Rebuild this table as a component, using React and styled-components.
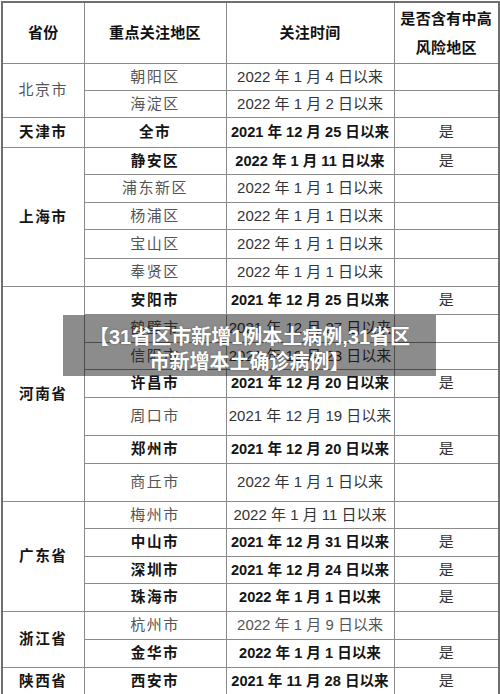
import React from "react";
import styled, { createGlobalStyle } from "styled-components";

const Global = createGlobalStyle`
  html, body { margin: 0; padding: 0; background: #fff; }
  body { font-family: "Liberation Sans", "Noto Sans CJK SC", sans-serif; }
`;

const Page = styled.div`
  position: relative;
  width: 500px;
  height: 694px;
  padding: 1px 0 0 1px;
  box-sizing: border-box;
  overflow: hidden;
`;

const Table = styled.table`
  border-collapse: collapse;
  table-layout: fixed;
  width: 497px;
  border: 2px solid #6e6e6e;
`;

const HeadRow = styled.tr`
  height: 61px;
`;

const Th = styled.th`
  border: 1px solid #8a8a8a;
  padding: 0;
  font-size: 15px;
  font-weight: 700;
  color: #111;
  text-align: center;
  vertical-align: middle;
  line-height: 29px;
  letter-spacing: 0.3px;
`;

const Row = styled.tr`
  height: ${(p) => p.$h}px;
`;

const Cell = styled.td`
  border: 1px solid #8a8a8a;
  padding: 0;
  text-align: center;
  vertical-align: middle;
  font-size: ${(p) => (p.$bold ? "14.6px" : "15px")};
  line-height: 18px;
  white-space: nowrap;
  font-weight: ${(p) => (p.$bold ? 700 : 400)};
  color: ${(p) => (p.$bold ? "#151515" : p.$light ? "#555" : "#333")};
  letter-spacing: ${(p) => (p.$spaced ? "1.5px" : "0")};
`;

const Banner = styled.div`
  position: absolute;
  left: 63px;
  top: 315px;
  width: 373px;
  height: 61px;
  box-sizing: border-box;
  padding-top: 8px;
  background: rgba(0, 0, 0, 0.45);
  display: flex;
  align-items: center;
  justify-content: center;
  text-align: center;
  color: #fff;
  font-family: "Liberation Sans", "Noto Sans CJK SC", sans-serif;
  font-weight: 700;
  font-size: 20px;
  line-height: 25px;
  white-space: nowrap;
  text-shadow: 0 0 2px rgba(0, 0, 0, 0.35);
`;

const groups = [
  {
    prov: "北京市",
    bold: false,
    rows: [
      { d: "朝阳区", t: "2022 年 1 月 4 日以来", h: 27 },
      { d: "海淀区", t: "2022 年 1 月 2 日以来", h: 27 },
    ],
  },
  {
    prov: "天津市",
    bold: true,
    rows: [{ d: "全市", t: "2021 年 12 月 25 日以来", r: "是", b: true, h: 30 }],
  },
  {
    prov: "上海市",
    bold: true,
    rows: [
      { d: "静安区", t: "2022 年 1 月 11 日以来", r: "是", b: true, h: 27 },
      { d: "浦东新区", t: "2022 年 1 月 1 日以来", h: 28 },
      { d: "杨浦区", t: "2022 年 1 月 1 日以来", h: 27 },
      { d: "宝山区", t: "2022 年 1 月 1 日以来", h: 29 },
      { d: "奉贤区", t: "2022 年 1 月 1 日以来", h: 28 },
    ],
  },
  {
    prov: "河南省",
    bold: true,
    rows: [
      { d: "安阳市", t: "2021 年 12 月 25 日以来", r: "是", b: true, h: 28 },
      { d: "鹤壁市", t: "2021 年 12 月 27 日以来", h: 28 },
      { d: "信阳市", t: "2021 年 12 月 23 日以来", h: 27 },
      { d: "许昌市", t: "2021 年 12 月 20 日以来", r: "是", b: true, h: 28 },
      { d: "周口市", t: "2021 年 12 月 19 日以来", h: 38 },
      { d: "郑州市", t: "2021 年 12 月 20 日以来", r: "是", b: true, h: 28 },
      { d: "商丘市", t: "2022 年 1 月 1 日以来", h: 38 },
    ],
  },
  {
    prov: "广东省",
    bold: true,
    rows: [
      { d: "梅州市", t: "2022 年 1 月 11 日以来", h: 27 },
      { d: "中山市", t: "2021 年 12 月 31 日以来", r: "是", b: true, h: 28 },
      { d: "深圳市", t: "2021 年 12 月 24 日以来", r: "是", b: true, h: 27 },
      { d: "珠海市", t: "2022 年 1 月 1 日以来", r: "是", b: true, h: 28 },
    ],
  },
  {
    prov: "浙江省",
    bold: true,
    rows: [
      { d: "杭州市", t: "2022 年 1 月 9 日以来", h: 28, light: true },
      { d: "金华市", t: "2022 年 1 月 1 日以来", r: "是", b: true, h: 28 },
    ],
  },
  {
    prov: "陕西省",
    bold: true,
    rows: [{ d: "西安市", t: "2021 年 11 月 28 日以来", r: "是", b: true, h: 29 }],
  },
];

export default function App() {
  return (
    <>
      <Global />
      <Page>
        <Table>
          <colgroup>
            <col style={{ width: 82 }} />
            <col style={{ width: 142 }} />
            <col style={{ width: 168 }} />
            <col style={{ width: 105 }} />
          </colgroup>
          <thead>
            <HeadRow>
              <Th>省份</Th>
              <Th>重点关注地区</Th>
              <Th>关注时间</Th>
              <Th>
                是否含有中高
                <br />
                风险地区
              </Th>
            </HeadRow>
          </thead>
          <tbody>
            {groups.map((g) =>
              g.rows.map((r, i) => (
                <Row key={g.prov + r.d} $h={r.h}>
                  {i === 0 && (
                    <Cell rowSpan={g.rows.length} $bold={g.bold} $light={!g.bold} $spaced>
                      {g.prov}
                    </Cell>
                  )}
                  <Cell $bold={r.b} $light $spaced>
                    {r.d}
                  </Cell>
                  <Cell $bold={r.b} $light={r.light}>
                    {r.t}
                  </Cell>
                  <Cell>{r.r || ""}</Cell>
                </Row>
              ))
            )}
          </tbody>
        </Table>
        <Banner>
          【31省区市新增1例本土病例,31省区
          <br />
          市新增本土确诊病例】
        </Banner>
      </Page>
    </>
  );
}
